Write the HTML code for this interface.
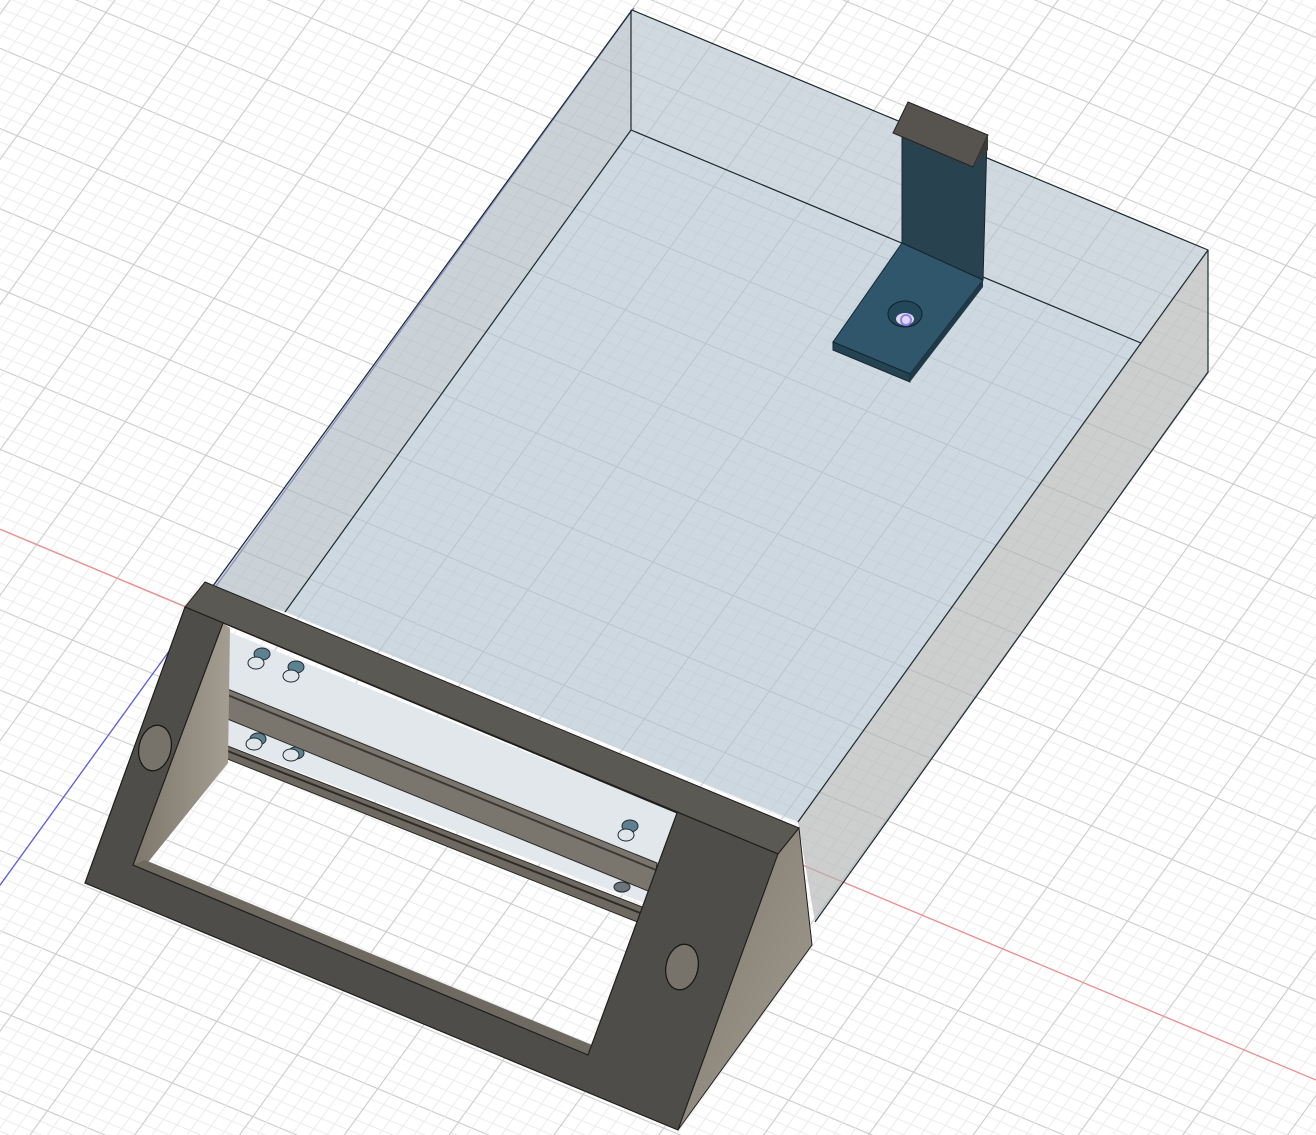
<!DOCTYPE html>
<html><head><meta charset="utf-8"><style>html,body{margin:0;padding:0;background:#fff;overflow:hidden}svg{display:block}</style></head>
<body>
<svg width="1316" height="1135" viewBox="0 0 1316 1135" xmlns="http://www.w3.org/2000/svg">
<defs>
<pattern id="gA" patternUnits="userSpaceOnUse" width="4000" height="74" patternTransform="translate(0,529) rotate(22.7)">
<rect x="0" y="0" width="4000" height="1.1" fill="#cbcbcb"/>
<rect x="0" y="12.3" width="4000" height="1" fill="#ebebeb"/>
<rect x="0" y="24.7" width="4000" height="1" fill="#ebebeb"/>
<rect x="0" y="37" width="4000" height="1" fill="#ebebeb"/>
<rect x="0" y="49.3" width="4000" height="1" fill="#ebebeb"/>
<rect x="0" y="61.7" width="4000" height="1" fill="#ebebeb"/>
</pattern>
<pattern id="gB" patternUnits="userSpaceOnUse" width="85" height="4000" patternTransform="translate(0,885) rotate(35.8)">
<rect x="0" y="0" width="1.1" height="4000" fill="#cbcbcb"/>
<rect x="14.2" y="0" width="1" height="4000" fill="#ebebeb"/>
<rect x="28.3" y="0" width="1" height="4000" fill="#ebebeb"/>
<rect x="42.5" y="0" width="1" height="4000" fill="#ebebeb"/>
<rect x="56.7" y="0" width="1" height="4000" fill="#ebebeb"/>
<rect x="70.8" y="0" width="1" height="4000" fill="#ebebeb"/>
</pattern>
<linearGradient id="wedge" x1="0" y1="0" x2="1" y2="1">
<stop offset="0" stop-color="#7f786d"/><stop offset="1" stop-color="#a39c90"/>
</linearGradient>
<linearGradient id="lwall" x1="0" y1="0" x2="1" y2="0">
<stop offset="0" stop-color="#7d766b"/><stop offset="1" stop-color="#a49d92"/>
</linearGradient>
</defs>

<rect width="1316" height="1135" fill="#fff"/>
<rect width="1316" height="1135" fill="url(#gA)"/>
<rect width="1316" height="1135" fill="url(#gB)"/>

<line x1="0" y1="529" x2="1316" y2="1080" stroke="#f08a8a" stroke-width="1.2"/>
<line x1="0" y1="885" x2="634" y2="8" stroke="#5a5ad8" stroke-width="1.2"/>

<polygon points="632,10 631,130 285,612 210,590" fill="#a9b6c0" fill-opacity="0.62"/>
<polygon points="632,10 1208,250 1141,343 631,130" fill="#b3c1cc" fill-opacity="0.62"/>
<polygon points="631,130 1141,343 798,822 285,612" fill="#b2c2cf" fill-opacity="0.64"/>
<polygon points="1208,250 1208,372 815,922 798,822 1141,343" fill="#b0b4b4" fill-opacity="0.64"/>
<g stroke="#1c2a30" stroke-width="1.2" fill="none">
<polyline points="210,590 632,10 1208,250 1208,372 815,922"/>
<polyline points="631,10 631,130 1141,343 1208,250"/>
<line x1="631" y1="130" x2="285" y2="612"/>
<line x1="1141" y1="343" x2="798" y2="822"/>
</g>

<polygon points="902,137 987,138 983,280 902,243" fill="#28424f" stroke="#16262e" stroke-width="1"/>
<polygon points="902,243 983,280 910,374 833,342" fill="#2f566b" stroke="#16262e" stroke-width="1"/>
<polygon points="833,342 910,374 910,382 833,350" fill="#244454" stroke="#16262e" stroke-width="1"/>
<polygon points="910,374 983,280 983,287 910,382" fill="#1f3a47"/>
<ellipse cx="905" cy="314" rx="17" ry="13" fill="#23485a" stroke="#10202a"/>
<ellipse cx="905" cy="319" rx="9" ry="6" fill="#d9dde8"/>
<circle cx="906" cy="320" r="5" fill="none" stroke="#9d7af0" stroke-width="2"/>
<polygon points="908,102 988,135 973,167 893,133" fill="#57544f" stroke="#222" stroke-width="1"/>
<polygon points="988,135 988,150 973,167" fill="#3d3b37"/>

<polygon points="229,632 677,813 655,870 228,690" fill="#e2e7eb"/>
<polygon points="228,718 655,893 650,905 228,745" fill="#e3e8ec"/>
<g fill="#5d8190" stroke="#1e2a30" stroke-width="1">
<ellipse cx="262" cy="654" rx="8" ry="6"/><ellipse cx="256" cy="663" rx="8" ry="6" fill="#dfe6ea"/>
<ellipse cx="296" cy="667" rx="8" ry="6"/><ellipse cx="291" cy="676" rx="8" ry="6" fill="#dfe6ea"/>
<ellipse cx="258" cy="739" rx="8" ry="6"/><ellipse cx="254" cy="744" rx="8" ry="6" fill="#dfe6ea"/>
<ellipse cx="296" cy="753" rx="8" ry="6"/><ellipse cx="291" cy="755" rx="8" ry="6" fill="#dfe6ea"/>
<ellipse cx="630" cy="826" rx="8" ry="6"/><ellipse cx="626" cy="835" rx="8" ry="6" fill="#dfe6ea"/>
<ellipse cx="622" cy="887" rx="8" ry="5" fill="#6f7478"/>
</g>
<polygon points="225,688 657,863 653,893 225,718" fill="#7b766d" stroke="#2a2926" stroke-width="1"/>
<line x1="225" y1="694" x2="656" y2="870" stroke="#3b3935" stroke-width="2"/>
<polygon points="225,745 650,910 645,925 225,758" fill="#6e6a62" stroke="#2a2926" stroke-width="1"/>
<line x1="225" y1="750" x2="648" y2="916" stroke="#2d2c29" stroke-width="2"/>
<polygon points="223,623 230,628 228,763 145,866 133,865" fill="url(#lwall)"/>
<polygon points="133,865 145,860 592,1045 588,1055" fill="#6e6a62"/>

<polygon points="205,582 799,828 778,854 185,607" fill="#5b5954" stroke="#1e1e1c" stroke-width="1"/>
<path fill-rule="evenodd" d="M185,607 L778,854 L678,1130 L85,883 Z M223,623 L677,813 L588,1055 L133,865 Z" fill="#4f4d49" stroke="#1e1e1c" stroke-width="1.2"/>
<polygon points="778,854 799,828 812,945 678,1130" fill="url(#wedge)" stroke="#1e1e1c" stroke-width="1"/>
<ellipse cx="155" cy="748" rx="16" ry="23" transform="rotate(12 155 748)" fill="#77736b" stroke="#151514" stroke-width="1.2"/>
<ellipse cx="682" cy="967" rx="16" ry="23" transform="rotate(12 682 967)" fill="#77736b" stroke="#151514" stroke-width="1.2"/>
</svg>
</body></html>
